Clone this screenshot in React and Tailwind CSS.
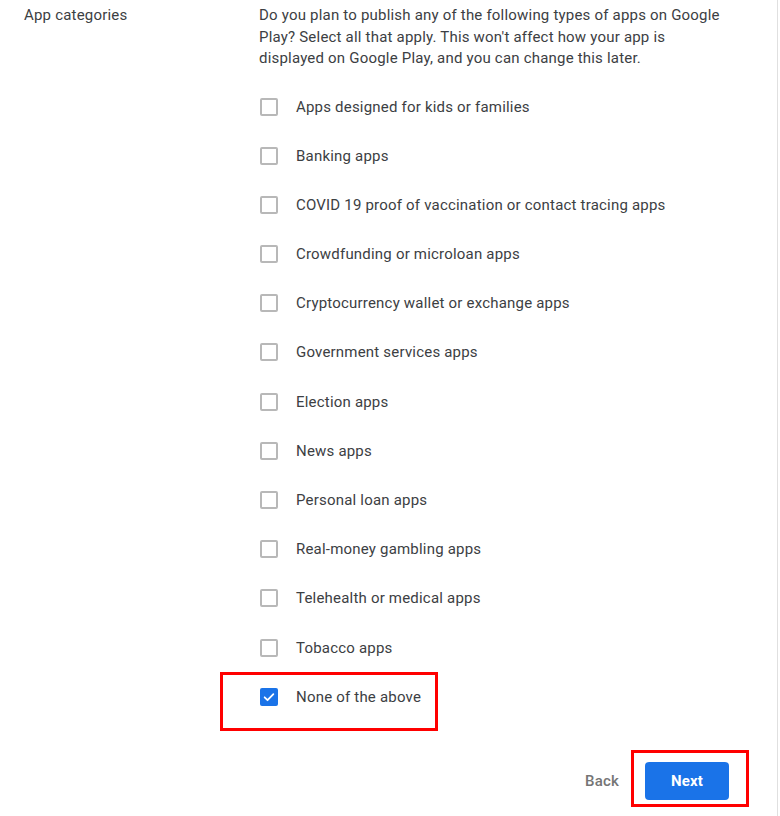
const categories = [
  'Apps designed for kids or families',
  'Banking apps',
  'COVID 19 proof of vaccination or contact tracing apps',
  'Crowdfunding or microloan apps',
  'Cryptocurrency wallet or exchange apps',
  'Government services apps',
  'Election apps',
  'News apps',
  'Personal loan apps',
  'Real-money gambling apps',
  'Telehealth or medical apps',
  'Tobacco apps',
]

function Checkbox({ checked }) {
  if (checked) {
    return (
      <span className="flex h-[18px] w-[18px] shrink-0 items-center justify-center rounded-[2px] bg-[#1a73e8]">
        <svg width="14" height="14" viewBox="0 0 24 24" fill="none">
          <path d="M4.5 12.5l5 5L19.5 7" stroke="white" strokeWidth="3" strokeLinecap="round" strokeLinejoin="round" />
        </svg>
      </span>
    )
  }
  return <span className="h-[18px] w-[18px] shrink-0 rounded-[2px] border-2 border-[#b8b8b8] bg-white" />
}

export default function App() {
  return (
    <div className="flex h-[816px] w-[780px] bg-white font-['Roboto',sans-serif] text-[15px] tracking-[0.2px] text-[#3c4043]">
      <div className="flex flex-1 flex-col">
        <div className="flex flex-1">
          <div className="w-[259px] shrink-0 pl-6 pt-[5px] leading-[21px] text-[#3c4043]">App categories</div>
          <div className="flex flex-col">
            <p className="w-[475px] pt-[5px] leading-[21.5px] text-[#3c4043]">
              Do you plan to publish any of the following types of apps on Google Play? Select all that apply. This
              won't affect how your app is displayed on Google Play, and you can change this later.
            </p>
            <div className="mt-[28px] flex flex-col gap-[31.2px]">
              {categories.map((c) => (
                <div key={c} className="flex h-[18px] items-center gap-[18px] pl-px">
                  <Checkbox />
                  <span className="leading-[18px]">{c}</span>
                </div>
              ))}
            </div>
            <div className="-ml-[39px] mt-[15px] h-[59px] w-[218px] border-[3px] border-[#ff0000] pl-[37px] pt-[13px]">
              <div className="flex h-[18px] items-center gap-[18px]">
                <Checkbox checked />
                <span className="leading-[18px]">None of the above</span>
              </div>
            </div>
          </div>
        </div>
        <div className="flex items-center justify-end gap-[12px] pb-[9px] pr-[28px]">
          <span className="mt-[6px] text-[15px] font-medium text-[#757575]">Back</span>
          <div className="flex h-[57px] w-[118px] items-start border-[3px] border-[#ff0000] pl-[11px] pt-[9px]">
            <button className="h-[38px] w-[84px] rounded-[4px] bg-[#1a73e8] text-[15px] font-bold text-white">
              Next
            </button>
          </div>
        </div>
      </div>
      <div className="w-px bg-[#e0e0e0]" />
      <div className="w-[2px]" />
    </div>
  )
}
